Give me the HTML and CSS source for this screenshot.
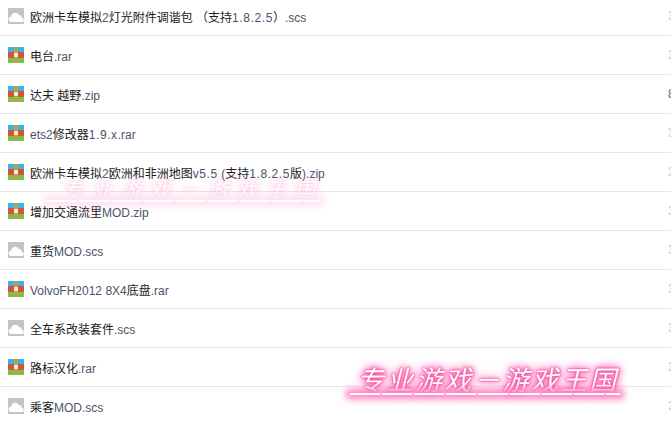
FILE: index.html
```html
<!DOCTYPE html>
<html lang="zh">
<head>
  <meta charset="UTF-8">
  <title>文件列表</title>
  <link rel="stylesheet" href="styles.css">
</head>
<body>
  <div class="file-list">
    <div class="file-row"><svg class="file-icon" viewBox="0 0 16 16"><use href="#cloud"/></svg><span class="file-name">欧洲卡车模拟<i>2</i>灯光附件调谐包 （支持<i class="num">1.8.2.5</i>）<i>.scs</i></span><span class="file-size">3</span></div>
    <div class="file-row"><svg class="file-icon" viewBox="0 0 16 16"><use href="#rar"/></svg><span class="file-name">电台<i>.rar</i></span><span class="file-size">3</span></div>
    <div class="file-row"><svg class="file-icon" viewBox="0 0 16 16"><use href="#rar"/></svg><span class="file-name">达夫 越野<i>.zip</i></span><span class="file-size dark">8</span></div>
    <div class="file-row"><svg class="file-icon" viewBox="0 0 16 16"><use href="#rar"/></svg><span class="file-name"><i>ets2</i>修改器<i class="num">1.9.x</i><i>.rar</i></span><span class="file-size">3</span></div>
    <div class="file-row"><svg class="file-icon" viewBox="0 0 16 16"><use href="#rar"/></svg><span class="file-name">欧洲卡车模拟<i>2</i>欧洲和非洲地图<i class="num">v5.5</i> <i>(</i>支持<i class="num">1.8.2.5</i>版<i>).zip</i></span><span class="file-size">3</span></div>
    <div class="file-row"><svg class="file-icon" viewBox="0 0 16 16"><use href="#rar"/></svg><span class="file-name">增加交通流里<i>MOD.zip</i></span><span class="file-size">3</span></div>
    <div class="file-row"><svg class="file-icon" viewBox="0 0 16 16"><use href="#cloud"/></svg><span class="file-name">重货<i>MOD.scs</i></span><span class="file-size">3</span></div>
    <div class="file-row"><svg class="file-icon" viewBox="0 0 16 16"><use href="#rar"/></svg><span class="file-name"><i>VolvoFH2012 8X4</i>底盘<i>.rar</i></span><span class="file-size">3</span></div>
    <div class="file-row"><svg class="file-icon" viewBox="0 0 16 16"><use href="#cloud"/></svg><span class="file-name">全车系改装套件<i>.scs</i></span><span class="file-size">3</span></div>
    <div class="file-row"><svg class="file-icon" viewBox="0 0 16 16"><use href="#rar"/></svg><span class="file-name">路标汉化<i>.rar</i></span><span class="file-size">3</span></div>
    <div class="file-row"><svg class="file-icon" viewBox="0 0 16 16"><use href="#cloud"/></svg><span class="file-name">乘客<i>MOD.scs</i></span><span class="file-size">3</span></div>
  </div>

  <div class="watermark faint">专业游戏－游戏王国</div>
  <div class="watermark strong">专业游戏－游戏王国</div>

  <svg class="icon-defs" width="0" height="0">
    <symbol id="cloud" viewBox="0 0 16 16">
      <rect width="16" height="16" fill="#c4c4c4"/>
      <path d="M3.4 14a2.8 2.8 0 0 1 0-5.6 3.8 3.8 0 0 1 7.2-1.5 3 3 0 0 1 3.2 3.1 2 2 0 0 1 .2 4z" fill="#fff"/>
    </symbol>
    <symbol id="rar" viewBox="0 0 16 16">
      <rect width="16" height="5" fill="#3db4e4"/>
      <rect y="5" width="16" height="6" fill="#d2553a"/>
      <rect y="11" width="16" height="5" fill="#7cc242"/>
      <rect x="6" width="4" height="16" fill="#b5a35c"/>
      <rect x="6" y="6" width="4" height="4" fill="#f6efc8"/>
    </symbol>
  </svg>
</body>
</html>
```
FILE: styles.css
```css
html, body {
  overflow: hidden;
}
body {
  margin: 0;
  height: 422px;
  background-color: #fff;
  font-family: "Liberation Sans", "Noto Sans CJK SC", sans-serif;
  font-size: 12px;
  color: #1c1c1c;
}
.file-list {
  margin-top: -3px;
}
.file-row {
  display: flex;
  align-items: center;
  height: 38px;
  padding-left: 8px;
  border-bottom: 1px solid #e8e8e8;
}
.file-icon {
  flex: none;
  width: 16px;
  height: 16px;
  margin-right: 6px;
}
.file-name {
  flex: 1;
  white-space: nowrap;
}
.file-name i {
  font-style: normal;
  color: #4a5468;
}
.file-name i.num {
  letter-spacing: 0.6px;
}
.file-size {
  flex: none;
  width: 3px;
  overflow: hidden;
  color: #c8c8c8;
}
.file-size.dark {
  color: #666;
}
.icon-defs {
  position: absolute;
}
.watermark {
  position: absolute;
  white-space: nowrap;
  font-family: "Noto Sans CJK SC", sans-serif;
  font-style: italic;
  color: #fff;
}
.watermark::after {
  content: "";
  position: absolute;
  left: 0;
  right: 0;
  bottom: 0;
  height: 2px;
  background: repeating-linear-gradient(to right, #fff 0, #fff 30px, #ffb0d8 30px, #ffb0d8 32px);
}
.watermark.strong {
  left: 350px;
  top: 364px;
  width: 263px;
  height: 31px;
  padding-left: 7px;
  font-size: 27px;
  line-height: 30px;
  letter-spacing: 2px;
  text-shadow: 0 0 1px #e8207f, 0 0 2px #f0359a, 0 0 4px #ff4fa8, 0 0 7px #ff6fb8, 0 0 10px #ff8fc8, 0 0 13px #ff8fc8;
}
.watermark.strong::after {
  box-shadow: 0 0 7px 4px #ff7fc0;
}
.watermark.faint {
  left: 47px;
  top: 178px;
  width: 257px;
  height: 24px;
  padding-left: 16px;
  font-size: 20px;
  line-height: 22px;
  letter-spacing: 9px;
  opacity: 0.32;
  text-shadow: 0 0 2px #ff6fb8, 0 0 5px #ff6fb8, 0 0 9px #ff8fc8, 0 0 12px #ffa8d4;
}
.watermark.faint::after {
  box-shadow: 0 0 7px 4px #ff9fd0;
}
```
